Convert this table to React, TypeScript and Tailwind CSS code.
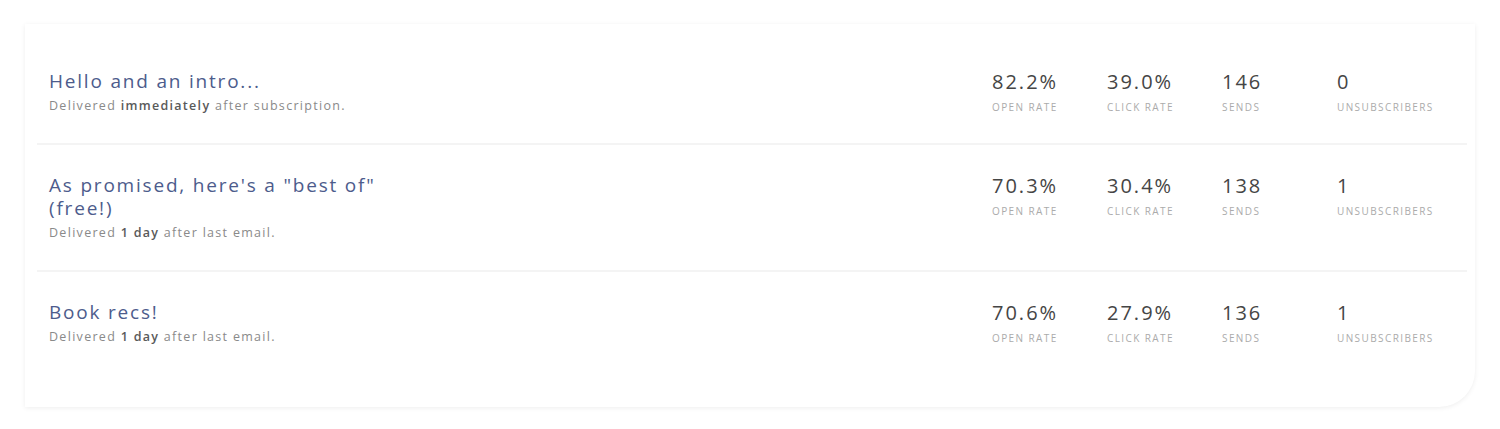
const emails = [
  {
    title: ["Hello and an intro..."],
    pre: "Delivered ",
    bold: "immediately",
    post: " after subscription.",
    stats: ["82.2%", "39.0%", "146", "0"],
  },
  {
    title: ['As promised, here\'s a "best of"', "(free!)"],
    pre: "Delivered ",
    bold: "1 day",
    post: " after last email.",
    stats: ["70.3%", "30.4%", "138", "1"],
  },
  {
    title: ["Book recs!"],
    pre: "Delivered ",
    bold: "1 day",
    post: " after last email.",
    stats: ["70.6%", "27.9%", "136", "1"],
  },
];

const labels = ["Open rate", "Click rate", "Sends", "Unsubscribers"];

/* ─── One email row ─── */
function EmailRow({ email, last }: { email: (typeof emails)[number]; last: boolean }) {
  return (
    <div className={`flex items-start py-[29px] pl-3 pr-[15px] ${last ? "" : "border-b-2 border-[#f4f4f4]"}`}>
      <div className="flex-1 min-w-0">
        {email.title.map((line) => (
          <p key={line} className="text-[19px] leading-[23px] tracking-[1.8px] text-[#4d5c8c]">
            {line}
          </p>
        ))}
        <p className="mt-[5px] text-[12.5px] leading-4 tracking-[1.3px] text-[#8a8a8a]">
          {email.pre}
          <span className="font-semibold text-[#5a5a5a]">{email.bold}</span>
          {email.post}
        </p>
      </div>

      <div className="grid grid-cols-4 w-[460px] shrink-0">
        {email.stats.map((value, i) => (
          <div key={labels[i]}>
            <p className="text-[20px] leading-[23px] tracking-[2px] text-[#454545]">{value}</p>
            <p className="mt-[7px] text-[10px] leading-[14px] uppercase tracking-[1.4px] text-[#ababab]">
              {labels[i]}
            </p>
          </div>
        ))}
      </div>
    </div>
  );
}

export default function App() {
  return (
    <div className="w-[1500px] h-[429px] bg-white pt-6 pl-[25px] font-['Open_Sans',sans-serif]">
      <div className="w-[1450px] h-[383px] bg-white rounded-br-[36px] shadow-[0_1px_5px_rgba(0,0,0,0.07)] pt-[17px] pl-3 pr-2">
        {emails.map((email, i) => (
          <EmailRow key={i} email={email} last={i === emails.length - 1} />
        ))}
      </div>
    </div>
  );
}
